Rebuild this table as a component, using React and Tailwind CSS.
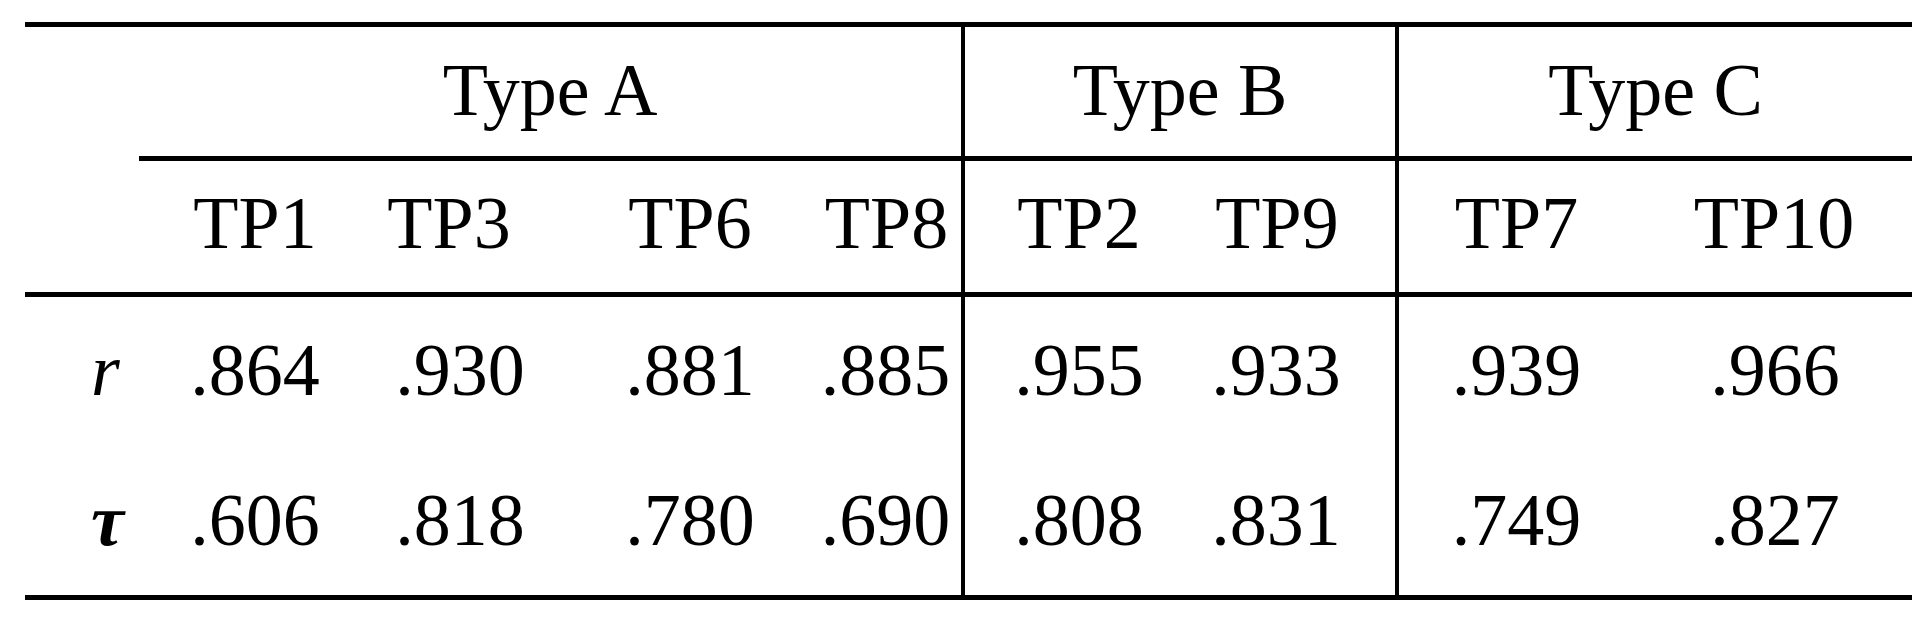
import React from 'react';

// column tweaks so the figures sit where the typeset table has them
const subHeads = [
  { label: 'TP1', cls: '' },
  { label: 'TP3', cls: 'pr-[12px]' },
  { label: 'TP6', cls: '' },
  { label: 'TP8', cls: 'pr-[29px] border-r-4' },
  { label: 'TP2', cls: '' },
  { label: 'TP9', cls: 'pr-[34px] border-r-4' },
  { label: 'TP7', cls: 'pl-[4px]' },
  { label: 'TP10', cls: 'pl-[6px]' },
];

const dataCls = ['', 'pl-[10px]', '', 'pr-[31px] border-r-4', '', 'pr-[36px] border-r-4', 'pl-[4px]', 'pl-[8px]'];

const rows = [
  { label: 'r', labelCls: 'italic', pt: 'pt-[36px]', values: ['.864', '.930', '.881', '.885', '.955', '.933', '.939', '.966'] },
  { label: 'τ', labelCls: 'italic font-bold', pt: 'pt-[37px]', values: ['.606', '.818', '.780', '.690', '.808', '.831', '.749', '.827'] },
];

export default function App() {
  return (
    <div className="min-h-[621px] bg-white pt-[22px] pl-[25px] text-black font-['Liberation_Serif','Times_New_Roman',serif] text-[74px] leading-none">
      <div className="w-[1887px] border-y-[5px] border-black grid grid-cols-[114px_232px_168px_302px_124px_228px_206px_231px_282px] grid-rows-[134px_136px_149px_149px]">
        {/* group headers */}
        <div className="row-span-2 border-b-[5px] border-black" />
        <div className="col-span-4 flex justify-center border-b-[5px] border-r-4 border-black pt-[26px]">Type A</div>
        <div className="col-span-2 flex justify-center border-b-[5px] border-r-4 border-black pt-[26px]">Type B</div>
        <div className="col-span-2 flex justify-center border-b-[5px] border-black pt-[26px]">Type C</div>

        {/* sub headers */}
        {subHeads.map((h) => (
          <div key={h.label} className={`flex justify-center whitespace-nowrap border-b-[5px] border-black pt-[25px] ${h.cls}`}>
            {h.label}
          </div>
        ))}

        {/* values */}
        {rows.map((row) => (
          <React.Fragment key={row.label}>
            <div className={`pl-[66px] ${row.pt} ${row.labelCls}`}>{row.label}</div>
            {row.values.map((v, i) => (
              <div key={i} className={`flex justify-center whitespace-nowrap border-black ${row.pt} ${dataCls[i]}`}>
                {v}
              </div>
            ))}
          </React.Fragment>
        ))}
      </div>
    </div>
  );
}
